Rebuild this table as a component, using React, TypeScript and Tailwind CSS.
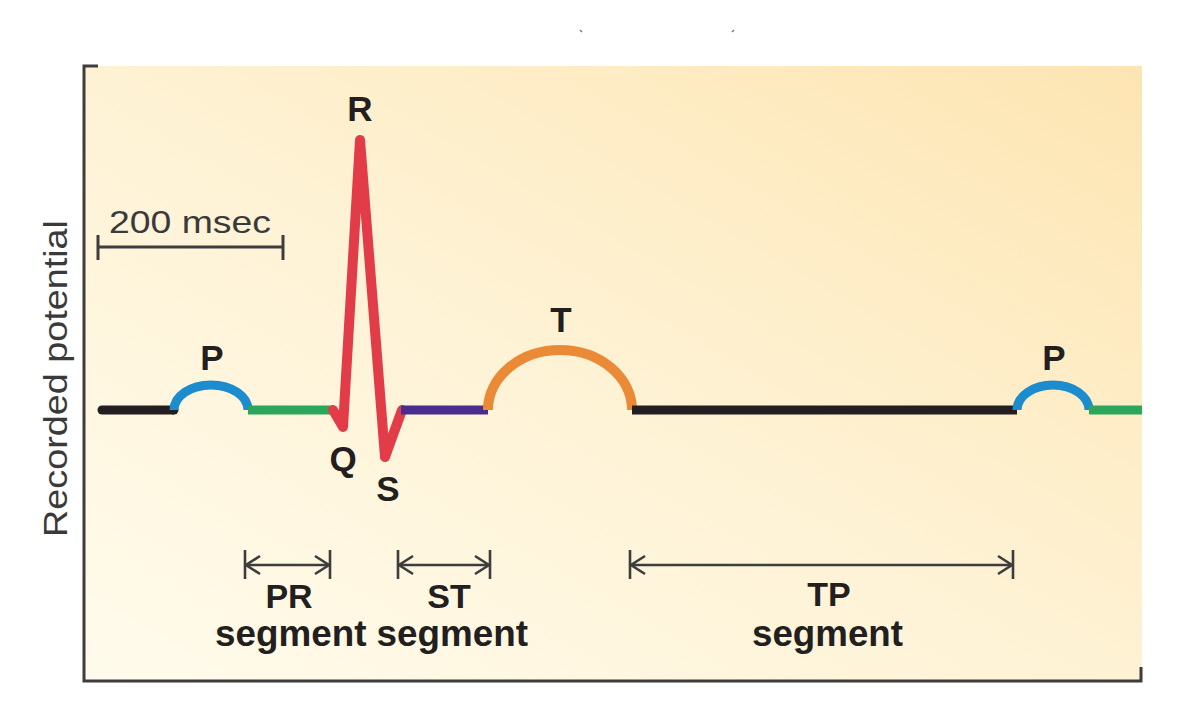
import React from "react";

const INK = "#231f20";
const AXIS = "#3d3d3d";

function Arrow({ x1, x2, y }: { x1: number; x2: number; y: number }) {
  return (
    <g stroke={AXIS} strokeWidth={2.6} fill="none" strokeLinecap="butt">
      <line x1={x1} y1={y - 15} x2={x1} y2={y + 14} />
      <line x1={x2} y1={y - 15} x2={x2} y2={y + 14} />
      <line x1={x1} y1={y} x2={x2} y2={y} />
      <polyline points={`${x1 + 15},${y - 9} ${x1 + 1},${y} ${x1 + 15},${y + 9}`} />
      <polyline points={`${x2 - 15},${y - 9} ${x2 - 1},${y} ${x2 - 15},${y + 9}`} />
    </g>
  );
}

export default function App() {
  return (
    <div className="relative w-[1200px] h-[714px] bg-white overflow-hidden font-['Liberation_Sans',Arial,sans-serif]">
      <div className="pl-[84px] pt-[66px]">
        <div className="w-[1058px] h-[615px] bg-[linear-gradient(to_top_right,#fffbec_0%,#fef2d4_50%,#fde5b2_100%)]" />
      </div>
      <svg
        className="absolute inset-0"
        width={1200}
        height={714}
        viewBox="0 0 1200 714"
      >
        {/* tiny specks at top */}
        <line x1={580} y1={30} x2={582} y2={32} stroke="#777" strokeWidth={1.5} />
        <line x1={732} y1={32} x2={734} y2={30} stroke="#777" strokeWidth={1.5} />

        {/* axes */}
        <g stroke={AXIS} strokeWidth={3} fill="none">
          <polyline points="98,66 84,66 84,681 1141,681 1141,667" />
        </g>

        {/* y label */}
        <text
          transform="translate(67,537) rotate(-90)"
          fontSize={33}
          fill="#3a3a3a"
          textLength={317}
          lengthAdjust="spacingAndGlyphs"
        >
          Recorded potential
        </text>

        {/* scale bar */}
        <text x={109} y={233} fontSize={32} fill="#3a3a3a" textLength={162} lengthAdjust="spacingAndGlyphs">
          200 msec
        </text>
        <g stroke={AXIS} strokeWidth={3}>
          <line x1={98} y1={247} x2={283} y2={247} />
          <line x1={98} y1={235} x2={98} y2={260} />
          <line x1={283} y1={235} x2={283} y2={260} />
        </g>

        {/* waveform */}
        <g fill="none" strokeWidth={9}>
          <path d="M102 410 H174" stroke={INK} strokeLinecap="round" />
          <path d="M174 410 H172" stroke={INK} />
          <path d="M174 410 A37 25 0 0 1 248 410" stroke="#1b8dcf" />
          <path d="M248 410 H334" stroke="#2ba65b" />
          <path
            d="M333 410 L343 427 L360 140 L385 457 L402 410"
            stroke="#e23c49"
            strokeWidth={10}
            strokeLinejoin="round"
            strokeLinecap="round"
          />
          <path d="M401 410 H488" stroke="#4a2c8e" />
          <path d="M488 410 A72 60 0 0 1 632 410" stroke="#ea8a37" strokeWidth={10} />
          <path d="M632 410 H1017" stroke={INK} />
          <path d="M1017 410 A36 25 0 0 1 1089 410" stroke="#1b8dcf" />
          <path d="M1089 410 H1142" stroke="#2ba65b" />
        </g>

        {/* wave labels */}
        <g fontWeight="bold" fontSize={35} fill={INK} textAnchor="middle">
          <text x={360} y={121}>R</text>
          <text x={212} y={370}>P</text>
          <text x={561} y={332}>T</text>
          <text x={1054} y={370}>P</text>
          <text x={343} y={471}>Q</text>
          <text x={388} y={501}>S</text>
        </g>

        {/* segment arrows */}
        <Arrow x1={245} x2={330} y={565} />
        <Arrow x1={398} x2={490} y={565} />
        <Arrow x1={630} x2={1013} y={565} />

        <g fontWeight="bold" fill={INK}>
          <text x={289} y={608} fontSize={34} textAnchor="middle">PR</text>
          <text x={449} y={608} fontSize={34} textAnchor="middle">ST</text>
          <text x={829} y={606} fontSize={34} textAnchor="middle">TP</text>
          <text x={215} y={646} fontSize={37} textLength={313} lengthAdjust="spacingAndGlyphs">
            segment segment
          </text>
          <text x={752} y={646} fontSize={37} textLength={151} lengthAdjust="spacingAndGlyphs">
            segment
          </text>
        </g>
      </svg>
    </div>
  );
}
